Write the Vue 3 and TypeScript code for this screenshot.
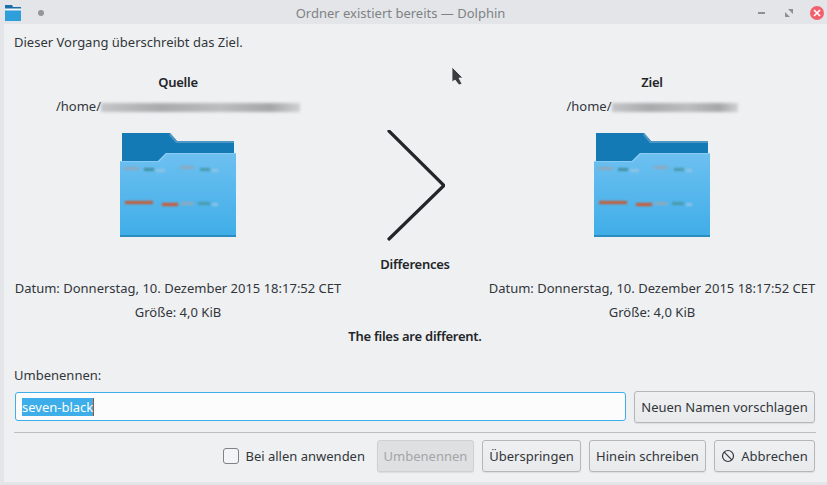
<script setup lang="ts">
interface Smear { x: number; y: number; w: number; c: string }

const topRow: Smear[] = [
  { x: 4, y: 34, w: 15, c: '#8fa9bd' },
  { x: 24, y: 35, w: 10, c: '#3f8f9f' },
  { x: 36, y: 36, w: 9, c: '#8fc4e6' },
  { x: 60, y: 33, w: 14, c: '#8fa9bd' },
  { x: 80, y: 35, w: 10, c: '#4a9aa8' },
  { x: 92, y: 36, w: 6, c: '#8fc4e6' }
]
const lowRow: Smear[] = [
  { x: 5, y: 68, w: 28, c: '#c7592f' },
  { x: 42, y: 70, w: 16, c: '#d4552a' },
  { x: 60, y: 69, w: 14, c: '#8fa9bd' },
  { x: 78, y: 69, w: 12, c: '#4a9aa8' },
  { x: 92, y: 70, w: 6, c: '#8fc4e6' }
]
const smears = [...topRow, ...lowRow]
const panes = [
  { key: 'src', title: 'Quelle', smearWidth: 199 },
  { key: 'dst', title: 'Ziel', smearWidth: 126 }
]
</script>

<template>
  <div class="window">
    <header class="titlebar">
      <div class="title-left">
        <svg class="app-icon" width="16" height="16" viewBox="0 0 16 16">
          <path d="M0 0h7l1 2h8v2H0z" fill="#1b6fa8" />
          <rect x="0" y="3.500" width="16" height="2" fill="#f4f8fb" />
          <rect x="0" y="5.500" width="16" height="10.500" fill="#2f9fdc" />
        </svg>
        <span class="pin"></span>
      </div>
      <div class="title">Ordner existiert bereits — Dolphin</div>
      <div class="title-right">
        <span class="minimize"></span>
        <svg width="8" height="8" viewBox="0 0 8 8">
          <path d="M3 0h5v5zM0 3l5 5H0z" fill="#8c8f93" />
        </svg>
        <span class="close">
          <svg width="8" height="8" viewBox="0 0 8 8">
            <path d="M1 1l6 6M7 1L1 7" stroke="#fff" stroke-width="1.7" />
          </svg>
        </span>
      </div>
    </header>

    <main class="body">
      <p class="message">Dieser Vorgang überschreibt das Ziel.</p>

      <section class="compare">
        <template v-for="(pane, i) in panes" :key="pane.key">
          <div class="cell bold" :class="i ? 'col-3' : 'col-1'" style="grid-row: 1">{{ pane.title }}</div>
          <div class="cell" :class="i ? 'col-3' : 'col-1'" style="grid-row: 2">
            /home/<span class="smear" :style="{ width: pane.smearWidth + 'px' }"></span>
          </div>
          <div class="icon-cell" :class="i ? 'col-3' : 'col-1'" style="grid-row: 3">
            <svg width="116" height="105" viewBox="0 0 116 105">
              <defs>
                <linearGradient :id="'front-' + pane.key" x1="0" y1="0" x2="0" y2="1">
                  <stop offset="0" stop-color="#6dc0f0" />
                  <stop offset="1" stop-color="#3fade8" />
                </linearGradient>
                <filter :id="'soft-' + pane.key" x="-20%" y="-100%" width="140%" height="300%">
                  <feGaussianBlur stdDeviation="0.8" />
                </filter>
              </defs>
              <path d="M2 0h48l7 8h57v20H2z" fill="#147ab6" />
              <path d="M50 0l7 8h57v2H56l-7-8z" fill="#4d96c4" />
              <path d="M2 28h36l8-8v8z" fill="#0f6697" />
              <path d="M0 28h38l8-8h70v84H0z" :fill="'url(#front-' + pane.key + ')'" />
              <path d="M0 28h38l8-8h70v1H47l-8 8H0z" fill="#8accf3" />
              <rect x="0" y="102" width="116" height="2" fill="#2a8dbf" />
              <rect
                v-for="(s, n) in smears"
                :key="n"
                :x="s.x"
                :y="s.y"
                :width="s.w"
                height="3"
                :fill="s.c"
                :filter="'url(#soft-' + pane.key + ')'"
              />
            </svg>
          </div>
          <div class="cell" :class="i ? 'col-3' : 'col-1'" style="grid-row: 5">Datum: Donnerstag, 10. Dezember 2015 18:17:52 CET</div>
          <div class="cell" :class="i ? 'col-3' : 'col-1'" style="grid-row: 6">Größe: 4,0 KiB</div>
        </template>

        <div class="icon-cell col-2" style="grid-row: 3">
          <svg width="60" height="112" viewBox="0 0 60 112">
            <path d="M4 1l55 54.500L4 109" fill="none" stroke="#232629" stroke-width="3.200" stroke-linecap="round" stroke-linejoin="miter" />
          </svg>
        </div>
        <div class="cell bold col-2" style="grid-row: 4">Differences</div>
        <div class="cell bold wide" style="grid-row: 7">The files are different.</div>
      </section>

      <label class="rename-label">Umbenennen:</label>
      <div class="rename-row">
        <div class="input"><span class="selected">seven-black</span></div>
        <button class="btn suggest">Neuen Namen vorschlagen</button>
      </div>

      <div class="separator"></div>

      <footer class="actions">
        <span class="checkbox"></span>
        <span class="check-label">Bei allen anwenden</span>
        <button class="btn disabled w-rename">Umbenennen</button>
        <button class="btn w-skip">Überspringen</button>
        <button class="btn w-write">Hinein schreiben</button>
        <button class="btn w-cancel">
          <svg width="14" height="14" viewBox="0 0 14 14">
            <circle cx="7" cy="7" r="5.500" fill="none" stroke="#31363b" stroke-width="1.200" />
            <path d="M3.200 3.200l7.600 7.600" stroke="#31363b" stroke-width="1.200" />
          </svg>
          Abbrechen
        </button>
      </footer>
    </main>

    <svg class="pointer" width="13" height="21" viewBox="0 0 13 21">
      <path d="M1 1v15l3-2 4 5 3-1-3-6h4z" fill="#3a3c3f" stroke="#f4f4f4" stroke-width="0.800" />
    </svg>
  </div>
</template>

<style scoped>
.window {
  position: relative;
  width: 827px;
  height: 485px;
  overflow: hidden;
  background: #e3e5e8;
  color: #31363b;
  font-family: "Noto Sans", sans-serif;
  font-size: 13px;
  line-height: 18px;
}

.titlebar {
  display: flex;
  align-items: center;
  height: 24px;
  padding-top: 2px;
  box-sizing: border-box;
}

.title-left {
  display: flex;
  align-items: center;
  width: 48px;
  height: 18px;
  padding-left: 5px;
  box-sizing: border-box;
}

.pin {
  width: 6px;
  height: 6px;
  margin-left: 17px;
  border-radius: 50%;
  background: #92959a;
}

.title {
  flex: 1;
  text-align: center;
  color: #7f8285;
}

.title-right {
  display: flex;
  align-items: center;
  width: 74px;
  box-sizing: border-box;
  padding-left: 5px;
}

.minimize {
  width: 7px;
  height: 2px;
  background: #8c8f93;
  margin-right: 20px;
}

.close {
  display: flex;
  align-items: center;
  justify-content: center;
  width: 14px;
  height: 14px;
  margin-left: 17px;
  border-radius: 50%;
  background: #f2606e;
}

.body {
  height: 458px;
  margin: 0 0 0 4px;
  padding: 9px 11px 0 10px;
  box-sizing: border-box;
  background: #eff0f2;
}

.message {
  margin: 0;
  height: 37px;
}

.compare {
  display: grid;
  grid-template-columns: 328px 146px 328px;
  grid-template-rows: 24px 24px 134px 24px 24px 24px 24px;
  text-align: center;
  line-height: 24px;
}

.col-1 { grid-column: 1; }
.col-2 { grid-column: 2; }
.col-3 { grid-column: 3; }
.wide { grid-column: 1 / 4; }

.cell {
  white-space: nowrap;
}

.bold {
  font-weight: 600;
  letter-spacing: -0.25px;
  color: #232629;
}

.smear {
  display: inline-block;
  height: 9px;
  vertical-align: -1px;
  background: linear-gradient(90deg, #c4c5c7, #a9aaac 30%, #bcbdbf 60%, #a5a6a8 85%, #d0d1d3);
  filter: blur(1.800px);
}

.icon-cell {
  display: flex;
  justify-content: center;
  align-items: flex-start;
  padding-top: 15px;
}

.icon-cell.col-2 {
  padding-top: 12px;
}

.rename-label {
  display: block;
  margin-top: 18px;
}

.rename-row {
  display: flex;
  gap: 8px;
  margin-top: 7px;
  padding-left: 1px;
  padding-right: 1px;
}

.input {
  flex: 1;
  height: 29px;
  margin-top: 1px;
  padding-left: 6px;
  box-sizing: border-box;
  display: flex;
  align-items: center;
  background: #fcfcfc;
  border: 1px solid #3daee9;
  border-radius: 3px;
}

.selected {
  background: #3daee9;
  color: #fcfcfc;
  border-right: 1px solid #a5512a;
  line-height: 18px;
  margin-top: 1px;
}

.btn {
  display: inline-flex;
  align-items: center;
  justify-content: center;
  gap: 6px;
  height: 32px;
  padding: 0;
  box-sizing: border-box;
  font: inherit;
  color: #31363b;
  background: linear-gradient(#eff0f2, #e9eaec);
  border: 1px solid #b4b6b8;
  border-radius: 3px;
  box-shadow: 0 1px 1px rgba(0, 0, 0, 0.08);
}

.suggest {
  width: 181px;
}

.separator {
  height: 1px;
  margin: 9px 0 7px;
  background: #bcbebf;
}

.actions {
  display: flex;
  align-items: center;
  gap: 8px;
  padding-right: 1px;
}

.checkbox {
  width: 16px;
  height: 16px;
  margin-left: auto;
  box-sizing: border-box;
  background: #f3f4f5;
  border: 1px solid #7f8285;
  border-radius: 3px;
}

.check-label {
  margin-left: -2px;
  margin-right: 4px;
}

.disabled {
  color: #a3a5a7;
  background: #dfe0e2;
  border-color: #cfd0d2;
}

.w-rename { width: 97px; }
.w-skip { width: 99px; }
.w-write { width: 117px; }
.w-cancel { width: 101px; }

.pointer {
  position: absolute;
  left: 451px;
  top: 66px;
}
</style>

<style>
html,
body {
  margin: 0;
}
</style>
